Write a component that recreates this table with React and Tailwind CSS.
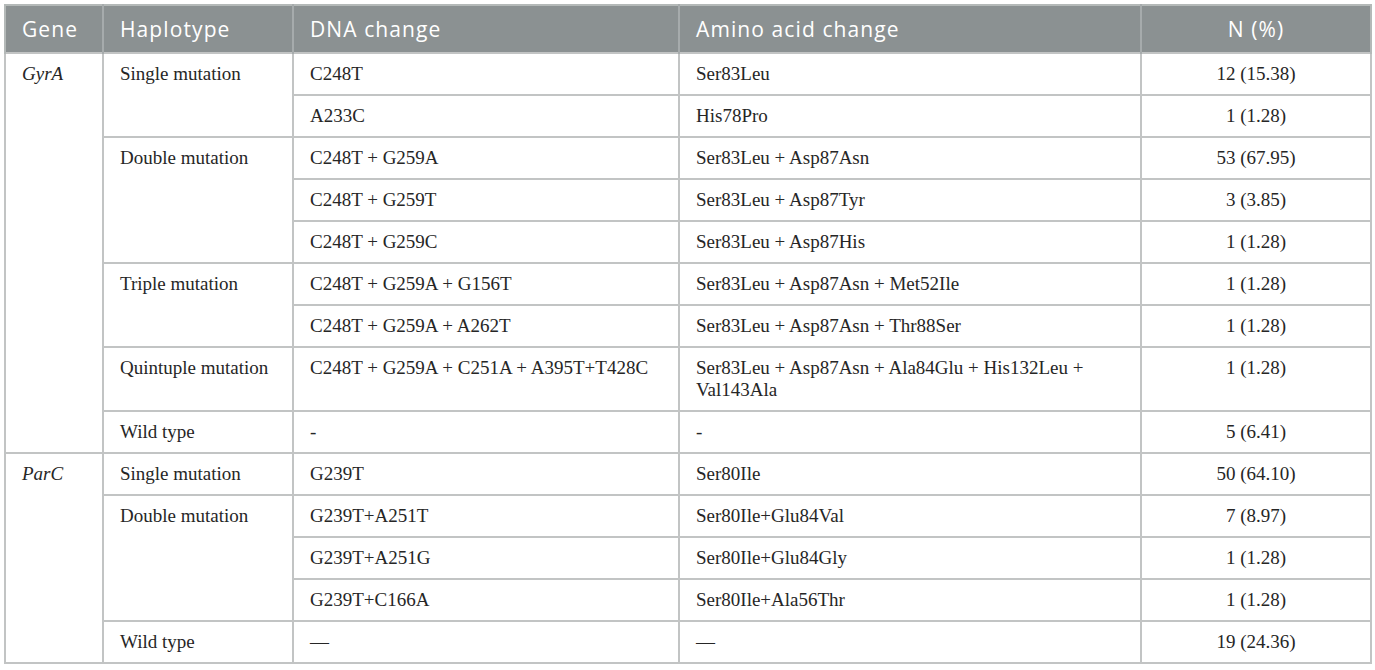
import React from 'react'

const rows = [
  { gene: 'GyrA', geneSpan: 9, hap: 'Single mutation', hapSpan: 2, dna: 'C248T', aa: 'Ser83Leu', n: '12 (15.38)' },
  { dna: 'A233C', aa: 'His78Pro', n: '1 (1.28)' },
  { hap: 'Double mutation', hapSpan: 3, dna: 'C248T + G259A', aa: 'Ser83Leu + Asp87Asn', n: '53 (67.95)' },
  { dna: 'C248T + G259T', aa: 'Ser83Leu + Asp87Tyr', n: '3 (3.85)' },
  { dna: 'C248T + G259C', aa: 'Ser83Leu + Asp87His', n: '1 (1.28)' },
  { hap: 'Triple mutation', hapSpan: 2, dna: 'C248T + G259A + G156T', aa: 'Ser83Leu + Asp87Asn + Met52Ile', n: '1 (1.28)' },
  { dna: 'C248T + G259A + A262T', aa: 'Ser83Leu + Asp87Asn + Thr88Ser', n: '1 (1.28)' },
  {
    hap: 'Quintuple mutation', hapSpan: 1, dna: 'C248T + G259A + C251A + A395T+T428C',
    aa: (<>Ser83Leu + Asp87Asn + Ala84Glu + His132Leu +<br />Val143Ala</>), n: '1 (1.28)',
  },
  { hap: 'Wild type', hapSpan: 1, dna: '-', aa: '-', n: '5 (6.41)' },
  { gene: 'ParC', geneSpan: 6, hap: 'Single mutation', hapSpan: 1, dna: 'G239T', aa: 'Ser80Ile', n: '50 (64.10)' },
  { hap: 'Double mutation', hapSpan: 3, dna: 'G239T+A251T', aa: 'Ser80Ile+Glu84Val', n: '7 (8.97)' },
  { dna: 'G239T+A251G', aa: 'Ser80Ile+Glu84Gly', n: '1 (1.28)' },
  { dna: 'G239T+C166A', aa: 'Ser80Ile+Ala56Thr', n: '1 (1.28)' },
  { hap: 'Wild type', hapSpan: 1, dna: '—', aa: '—', n: '19 (24.36)' },
]

const td = 'border-2 border-[#c2c4c4] px-4 py-[9px] align-top text-left'
const th = 'border-x-2 border-[#a6abac] px-4 py-[12px] text-left font-normal'

export default function App() {
  return (
    <div className="w-[1375px] h-[670px] bg-white pt-1 pl-1">
      <table
        className="table-fixed w-[1366px] border-collapse border-2 border-[#b4b9b8] text-[19px] leading-[22px] text-[#262626]"
        style={{ fontFamily: '"Liberation Serif", "Times New Roman", serif' }}
      >
        <colgroup>
          <col className="w-[98px]" />
          <col className="w-[190px]" />
          <col className="w-[386px]" />
          <col className="w-[462px]" />
          <col className="w-[230px]" />
        </colgroup>
        <thead>
          <tr className="bg-[#8b9192] text-white text-[21px] leading-[22px] tracking-[1.1px] font-['Open_Sans',sans-serif]">
            <th className={th + ' border-l-[#b4b9b8]'}>Gene</th>
            <th className={th}>Haplotype</th>
            <th className={th}>DNA change</th>
            <th className={th}>Amino acid change</th>
            <th className={th + ' !text-center border-r-[#b4b9b8]'}>N (%)</th>
          </tr>
        </thead>
        <tbody>
          {rows.map((r, i) => (
            <tr key={i}>
              {r.gene && (
                <td rowSpan={r.geneSpan} className={td + ' italic'}>{r.gene}</td>
              )}
              {r.hap && (
                <td rowSpan={r.hapSpan} className={td}>{r.hap}</td>
              )}
              <td className={td}>{r.dna}</td>
              <td className={td}>{r.aa}</td>
              <td className={td + ' !text-center'}>{r.n}</td>
            </tr>
          ))}
        </tbody>
      </table>
    </div>
  )
}
